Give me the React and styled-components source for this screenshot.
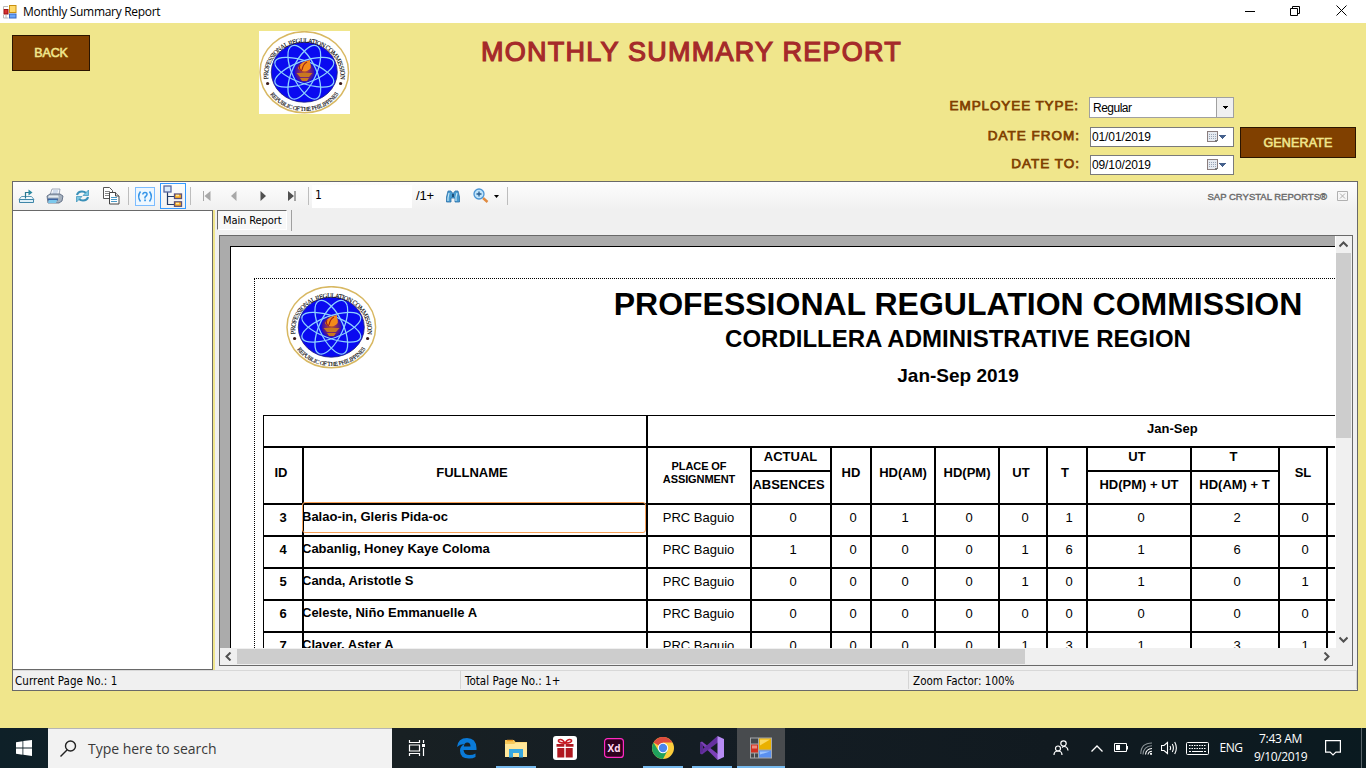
import React from "react";
import styled, { createGlobalStyle } from "styled-components";

const Global = createGlobalStyle`
  * { box-sizing: border-box; }
  body { margin: 0; overflow: hidden; background: #f0e68c; font-family: "Liberation Sans", Arial, sans-serif; }
  svg { display: block; flex: none; }
`;

const ui = `"Open Sans", "Segoe UI", sans-serif`;
const tahoma = `"DejaVu Sans Condensed", "DejaVu Sans", Tahoma, sans-serif`;

const Screen = styled.div`
  width: 1366px;
  height: 768px;
  display: flex;
  flex-direction: column;
  background: #f0e68c;
`;

/* Single-line run of text; $sp is the tracking in px. */
const Text = styled.span`
  white-space: pre;
  display: block;
  font-size: ${(p) => p.$size || 13}px;
  line-height: ${(p) => p.$lh || 16}px;
  letter-spacing: ${(p) => p.$sp || 0}px;
  font-weight: ${(p) => (p.$bold ? 700 : 400)};
  font-family: ${(p) => p.$font || "inherit"};
  color: ${(p) => p.$color || "inherit"};
`;

/* Regular letterforms thickened by a stroke, as WinForms emboldens its default face. */
const Heavy = styled(Text)`
  -webkit-text-stroke: ${(p) => p.$stroke || 0.5}px currentColor;
`;

/* ---------- title bar ---------- */
const TitleBar = styled.header`
  height: 23px;
  background: #fff;
  display: flex;
  align-items: center;
  padding-left: 3px;
  gap: 6px;
`;
const WindowButtons = styled.div`
  margin-left: auto;
  display: flex;
  padding-right: 2px;
`;
const WindowButton = styled.div`
  width: 46px;
  height: 22px;
  display: flex;
  align-items: center;
  justify-content: center;
`;

/* ---------- header ---------- */
const Header = styled.section`
  height: 158px;
  display: flex;
  align-items: flex-start;
`;
const BrownButton = styled.div`
  width: ${(p) => p.$w}px;
  height: ${(p) => p.$h}px;
  background: #804000;
  border: 1px solid #2b1500;
  display: flex;
  align-items: center;
  justify-content: center;
  color: #f0e68c;
`;
const BackSlot = styled.div`
  width: 259px;
  padding: 12px 0 0 12px;
`;
const LogoSlot = styled.div`
  width: 91px;
  margin-top: 8px;
  background: #fff;
`;
const TitleSlot = styled.div`
  width: 552px;
  padding: 12px 0 0 131px;
`;
const Form = styled.div`
  width: 332px;
  padding-top: 74px;
`;
const FormRow = styled.div`
  display: flex;
  justify-content: flex-end;
  align-items: flex-start;
  height: ${(p) => p.$h}px;
  gap: 10px;
`;
const Select = styled.div`
  width: 145px;
  height: 21px;
  border: 1px solid #a0a0a0;
  background: #fff;
  display: flex;
  justify-content: space-between;
  padding-left: 3px;
`;
const SelectArrow = styled.div`
  width: 17px;
  border-left: 1px solid #a0a0a0;
  background: #f0f0f0;
  display: flex;
  align-items: center;
  justify-content: center;
`;
const DateBox = styled.div`
  width: 144px;
  height: 20px;
  border: 1px solid #7a7a7a;
  background: #fff;
  display: flex;
  justify-content: space-between;
  padding: 0 6px 0 1px;
`;
const GenerateSlot = styled.div`
  padding: 104px 0 0 6px;
`;

/* ---------- report viewer ---------- */
const Viewer = styled.main`
  margin-left: 12px;
  width: 1346px;
  height: 510px;
  border: 1px solid #696969;
  display: flex;
  flex-direction: column;
  background: #f0f0f0;
`;
const Toolbar = styled.div`
  height: 28px;
  flex: none;
  display: flex;
  align-items: center;
  background: linear-gradient(#fdfdfd, #f0f0f0);
`;
const Tool = styled.div`
  width: ${(p) => p.$w}px;
  height: 28px;
  display: flex;
  align-items: center;
  justify-content: center;
`;
const Selected = styled.div`
  width: 26px;
  height: 26px;
  border: 1px solid #3399ff;
  display: flex;
  align-items: center;
  justify-content: center;
`;
const Divider = styled.div`
  width: 1px;
  height: 18px;
  background: #bdbdbd;
  margin-right: ${(p) => p.$r || 0}px;
`;
const PageInput = styled.div`
  width: 100px;
  height: 23px;
  background: #fff;
  padding-left: 3px;
`;
const Brand = styled.div`
  margin-left: auto;
  padding: 2px 9px 0 0;
  display: flex;
  align-items: center;
  gap: 10px;
`;
const Body = styled.div`
  display: flex;
  height: 460px;
  flex: none;
`;
const TreePane = styled.div`
  width: 200px;
  background: #fff;
  border-top: 1px solid #696969;
  border-right: 1px solid #696969;
  border-bottom: 1px solid #696969;
`;
const Splitter = styled.div`
  width: 4px;
  border-left: 2px solid #f0e68c;
`;
const ReportPane = styled.div`
  flex: 1;
  display: flex;
  flex-direction: column;
`;
const Tabs = styled.div`
  height: 25px;
  display: flex;
  align-items: flex-start;
`;
const Tab = styled.div`
  width: 70px;
  height: 20px;
  border: 1px solid #696969;
  border-right-color: #fff;
  border-bottom-color: #fff;
  background: #f8f8f8;
  padding: 2px 0 0 5px;
`;
const TabEdge = styled.div`
  margin-left: 4px;
  width: 1px;
  height: 21px;
  background: #a0a0a0;
`;
const Canvas = styled.div`
  margin-left: 2px;
  width: 1134px;
  height: 431px;
  border: 1px solid #696969;
  background: #ababab;
  display: grid;
  grid-template-columns: 1115px 17px;
  grid-template-rows: 412px 17px;
`;
const PageWindow = styled.div`
  overflow: hidden;
  padding: 10px 0 0 10px;
`;
const Page = styled.div`
  width: 1300px;
  height: 600px;
  background: #fff;
  border: 1px solid #000;
  padding: 31px 0 0 23px;
`;
const Margin = styled.div`
  height: 560px;
  border-top: 1px dotted #000;
  border-left: 1px dotted #000;
  padding: 7px 0 0 8px;
`;
const Masthead = styled.div`
  display: flex;
  height: 129px;
`;
const MastLogo = styled.div`
  padding-left: 23px;
  width: 135px;
`;
const MastText = styled.div`
  width: 1120px;
  display: flex;
  flex-direction: column;
  align-items: center;
`;

/* ---------- report table ---------- */
const columns = "39px 344px 104px 80px 40px 64px 64px 48px 40px 104px 88px 48px 60px";
const BandRow = styled.div`
  display: grid;
  grid-template-columns: 382px 1fr;
  height: 31px;
  border-left: 1px solid #000;
`;
const BandCell = styled.div`
  border-top: 1px solid #000;
  border-left: ${(p) => (p.$line ? "2px solid #000" : "0")};
  padding: 5px 0 0 499px;
`;
const Row = styled.div`
  display: grid;
  grid-template-columns: ${columns};
  height: ${(p) => p.$h}px;
`;
const Cell = styled.div`
  position: relative;
  border-left: ${(p) => (p.$first ? 1 : 2)}px solid #000;
  border-top: 2px solid #000;
  display: flex;
  flex-direction: column;
  align-items: ${(p) => (p.$left ? "flex-start" : "center")};
  padding-left: ${(p) => p.$pl || 0}px;
  padding-right: ${(p) => p.$pr || 0}px;
  padding-top: ${(p) => p.$pt || 0}px;
`;
const Half = styled.div`
  align-self: stretch;
  display: flex;
  justify-content: center;
  height: ${(p) => p.$h}px;
  padding: ${(p) => p.$pad};
  border-bottom: ${(p) => (p.$line ? "2px solid #000" : "0")};
`;
const NameText = styled(Text)`
  margin-left: -2px;
`;
const Highlight = styled.div`
  position: absolute;
  left: -2px;
  top: -3px;
  width: 344px;
  height: 31px;
  border-radius: 3px;
  border: 1px solid #f8a055;
`;

/* ---------- scrollbars ---------- */
const VBar = styled.div`
  background: #f0f0f0;
  border-left: 1px solid #fff;
  display: flex;
  flex-direction: column;
  align-items: center;
  padding: 1px 1px 0 0;
`;
const VThumb = styled.div`
  width: 15px;
  height: 185px;
  background: #cdcdcd;
  margin: 1px 0 auto;
`;
const HBar = styled.div`
  background: #f0f0f0;
  display: flex;
  align-items: center;
`;
const HThumb = styled.div`
  width: 788px;
  height: 15px;
  background: #cdcdcd;
  margin-right: auto;
`;
const BarArrow = styled.div`
  width: ${(p) => p.$w}px;
  height: ${(p) => p.$h}px;
  display: flex;
  align-items: center;
  justify-content: center;
`;
const Corner = styled.div`
  background: #f0f0f0;
`;

const Status = styled.div`
  flex: 1;
  display: flex;
  align-items: flex-start;
  border-top: 1px solid #d8d8d8;
`;
const StatusCell = styled.div`
  width: ${(p) => p.$w}px;
  height: 18px;
  border-right: 1px solid #d5d5d5;
  padding: 2px 0 0 ${(p) => p.$pl}px;
`;

/* ---------- taskbar ---------- */
const Taskbar = styled.footer`
  height: 40px;
  margin-top: 37px;
  display: flex;
  color: #fff;
  background: linear-gradient(90deg, #0e2028 0, #182023 400px, #141d24 700px, #111a20 1050px, #0a1a20 1366px);
`;
const Slot = styled.div`
  width: ${(p) => p.$w}px;
  height: 40px;
  display: flex;
  align-items: center;
  justify-content: center;
`;
const Search = styled.div`
  width: 344px;
  background: #f2f2f2;
  border-top: 1px solid #b5b5b5;
  display: flex;
  align-items: center;
  padding-left: 11px;
  gap: 11px;
`;
const TaskApp = styled.div`
  width: ${(p) => (p.$active ? 48 : 49)}px;
  margin-left: ${(p) => (p.$active ? 1 : 0)}px;
  height: 40px;
  display: flex;
  flex-direction: column;
  align-items: center;
  background: ${(p) => (p.$active ? "#484b4e" : "transparent")};
`;
const AppIcon = styled.div`
  height: 38px;
  padding-top: 2px;
  display: flex;
  align-items: center;
`;
const Running = styled.div`
  height: 2px;
  width: ${(p) => (p.$active ? 48 : 40)}px;
  background: #76b9ed;
`;
const Tray = styled.div`
  margin-left: auto;
  display: flex;
  width: 323px;
`;
const Clock = styled.div`
  width: 67px;
  padding-top: 2px;
  display: flex;
  flex-direction: column;
  align-items: center;
`;
const ShowDesktop = styled.div`
  margin-left: 9px;
  width: 1px;
  background: #59646a;
`;

function Seal({ id, width = 91, height = 83 }) {
  return (
    <svg width={width} height={height} viewBox="0 0 91 83" preserveAspectRatio="none">
      <defs>
        <path id={`${id}t`} d="M9.700 51 A36.200 33.300 0 1 1 80.900 51" />
        <path id={`${id}b`} d="M5.500 51 A40.800 37.200 0 0 0 85.100 51" />
        <radialGradient id={`${id}g`}>
          <stop offset="0" stopColor="#c05a20" />
          <stop offset="0.55" stopColor="#7a2870" />
          <stop offset="1" stopColor="#3010b0" />
        </radialGradient>
      </defs>
      <ellipse cx="45.3" cy="41.2" rx="44.3" ry="40.5" fill="#fff" stroke="#d8b862" strokeWidth="1.5" />
      <ellipse cx="45.3" cy="41.2" rx="33" ry="30" fill="#0a0af0" stroke="#20207a" strokeWidth="0.8" />
      <g transform="translate(45.3 41.2) scale(1 .91)" fill="none" stroke="#8ed2ff" strokeWidth="1.3">
        {[22.5, 67.5, 112.5, 157.5].map((a) => (
          <ellipse key={a} rx="31.500" ry="12" transform={`rotate(${a})`} />
        ))}
      </g>
      <ellipse cx="45.5" cy="41" rx="10" ry="10.5" fill={`url(#${id}g)`} />
      <path d="M39 37 Q42 30 51 29 L51 32 Q54 37 48 40 Q41 41 39 37 Z" fill="#f48a1a" />
      <path d="M43 39 Q44 33 48 31 M41 34 Q39 38 43 40" fill="none" stroke="#9c2418" strokeWidth="1.2" />
      <path d="M37.5 42 H53.5 L50 46 H41 Z M41 47 H50 L48 50 H43 Z" fill="#c87820" />
      <circle cx="8.6" cy="52.5" r="1.6" fill="#3a1a18" />
      <circle cx="81.6" cy="52.5" r="1.6" fill="#3a1a18" />
      <text fontFamily="Liberation Serif, serif" fontSize="6.600" letterSpacing="-0.6" fill="#111" stroke="#111" strokeWidth=".12" textAnchor="middle">
        <textPath href={`#${id}t`} startOffset="50%">PROFESSIONAL REGULATION COMMISSION</textPath>
      </text>
      <text fontFamily="Liberation Serif, serif" fontSize="6" letterSpacing="-0.35" fill="#111" stroke="#111" strokeWidth=".12" textAnchor="middle">
        <textPath href={`#${id}b`} startOffset="50%">REPUBLIC OF THE PHILIPPINES</textPath>
      </text>
    </svg>
  );
}

const FormIcon = ({ s = 14 }) => (
  <svg width={s} height={s} viewBox="0 0 22 21">
    <rect width="22" height="21" fill="#a5a8ab" />
    <path d="M1 1h7v5H1zM1 16h3v4H1zM5 16h3v4H5z" fill="#45494c" />
    <rect x="1" y="7" width="7" height="8" fill="#d03020" />
    <path d="M2 8h5v3H2z" fill="#f08a7a" />
    <rect x="9" y="1" width="12" height="11" fill="#eab000" />
    <path d="M10 2h10L10 8z" fill="#fbd860" />
    <rect x="9" y="13" width="12" height="7" fill="#5a90f0" />
    <path d="M10 14h10l-10 3z" fill="#9cc4ff" />
  </svg>
);

const SmallFormIcon = () => (
  <svg width="14" height="14" viewBox="0 0 14 14">
    <path d="M.5 4V1.500H5M.5 10v3h5M3 10v3" fill="none" stroke="#b8b8b8" />
    <rect x="1" y="4.500" width="4" height="4.500" fill="#d83030" stroke="#9c1010" />
    <rect x="6.500" y=".5" width="6.500" height="7" fill="#ffda6a" stroke="#c89010" />
    <rect x="6.500" y="9" width="6.500" height="4" fill="#6aa4fa" stroke="#3868c0" />
  </svg>
);

const CalendarDrop = () => (
  <svg width="21" height="18" viewBox="0 0 21 18" shapeRendering="crispEdges">
    <path d="M1.500 3.500h10v8l-2 2h-8z" fill="#e6eaf0" stroke="#8a7d7d" />
    <path d="M3 6.500h7M3 8.500h7M3 10.500h7" stroke="#9aa6b8" strokeDasharray="1 1" />
    <path d="M9 14v-2h3v1h-1v1z" fill="#777" />
    <path d="M13 7h7v1h-1v1h-1v1h-1v1h-1v-1h-1V9h-1V8h-1z" fill="#45608c" />
  </svg>
);

const Chevron = ({ d }) => (
  <svg width="9" height="9" viewBox="0 0 9 9"><path d={d} fill="none" stroke="#505050" strokeWidth="2" /></svg>
);

const Nav = ({ d, c }) => (
  <svg width="10" height="10" viewBox="0 0 10 10"><path d={d} fill={c} /></svg>
);

const ExportIcon = () => (
  <svg width="18" height="16" viewBox="0 0 18 16" fill="none">
    <path d="M3.500 8.500h10l2.500 3H1z" fill="#f2f9fd" stroke="#5a98b4" />
    <path d="M1.500 11.500h14v3h-14z" fill="#dff0f8" stroke="#3f86a8" />
    <path d="M7.500 10.500V4.500h4" stroke="#2a7890" strokeWidth="1.200" />
    <path d="M10.500 1.500l4 3-4 3z" fill="#2a88a0" />
  </svg>
);
const PrintIcon = () => (
  <svg width="18" height="16" viewBox="0 0 18 16">
    <path d="M6 1h8l-1 6H4z" fill="#f6f8fc" stroke="#8a94a8" strokeWidth=".8" />
    <path d="M7 3h5M6.500 5h5" stroke="#a8bede" />
    <path d="M1 8l3-2h10l3 2-1 5-3 2H2z" fill="#a5b0bd" stroke="#50607a" strokeWidth=".8" />
    <path d="M3 7.500h9l1 2H2z" fill="#e4ecf4" />
    <path d="M2 10.500h10v2H2z" fill="#3b64a4" />
    <path d="M3 12h8l-1 3H2z" fill="#7cc8ec" />
  </svg>
);
const RefreshIcon = () => (
  <svg width="15" height="14" viewBox="0 0 15 14" fill="none">
    <path d="M2 6Q3 2.500 7 2.500Q9.500 2.500 11 4" stroke="#3a90b8" strokeWidth="2.200" />
    <path d="M13.500 1v5.500H8z" fill="#7cc8e4" stroke="#3a90b8" strokeWidth=".7" />
    <path d="M13 8Q12 11.500 8 11.500Q5.500 11.500 4 10" stroke="#3a90b8" strokeWidth="2.200" />
    <path d="M1.500 13V7.500H7z" fill="#7cc8e4" stroke="#3a90b8" strokeWidth=".7" />
  </svg>
);
const CopyIcon = () => (
  <svg width="17" height="18" viewBox="0 0 17 18">
    <path d="M.5.5h6l3 3v8h-9z" fill="#fff" stroke="#555" />
    <path d="M2 4.500h5M2 6.500h5M2 8.500h5" stroke="#888" />
    <path d="M6.500 5.500h6l3.500 3.500v8h-9.500z" fill="#fff" stroke="#444" />
    <path d="M12.500 5.500V9H16" fill="#ddd" stroke="#444" />
    <path d="M8 10.500h6M8 12.500h6M8 14.500h6" stroke="#4a9ac8" />
  </svg>
);
const HelpIcon = () => (
  <svg width="20" height="19" viewBox="0 0 20 19">
    <rect x=".5" y=".5" width="19" height="18" fill="#eef7ff" stroke="#7cbcff" />
    <path d="M5.500 4.500Q1.800 9.500 5.500 14.500M14.500 4.500Q18.200 9.500 14.500 14.500M7.800 7.500Q8 5.500 10 5.500Q12.300 5.500 12 7.500Q11.700 8.700 10 10V11.500" fill="none" stroke="#3494e8" strokeWidth="1.500" />
    <rect x="9.200" y="12.500" width="1.700" height="1.700" fill="#3494e8" />
  </svg>
);
const TreeIcon = () => (
  <svg width="20" height="22" viewBox="0 0 20 22">
    <path d="M4.500 7v12.500h7M4.500 11.500h7" fill="none" stroke="#223a66" strokeWidth="1.200" />
    <rect x="1" y="1" width="7" height="6" fill="#dcebfa" stroke="#5868a0" strokeWidth="1.300" />
    <rect x="11.500" y="9" width="7" height="4.500" fill="#ffb020" stroke="#5c5078" strokeWidth="1.300" />
    <rect x="11.500" y="16.800" width="7" height="4.500" fill="#ffb020" stroke="#5c5078" strokeWidth="1.300" />
    <path d="M13 10.500h3M13 18.500h3" stroke="#ffe6a0" strokeWidth="1.300" />
  </svg>
);
const Binoculars = () => (
  <svg width="14" height="13" viewBox="0 0 14 13">
    <path d="M2 1h3l1 2h2l1-2h3l1.500 6v5H9V8H5v4H.5V7z" fill="#4a9cd0" stroke="#2c70a8" strokeWidth=".8" />
    <path d="M3 3L2 8v3M11 3l-1 4v4" stroke="#c4e6f8" strokeWidth="1.200" fill="none" />
    <path d="M6 4h2v3H6z" fill="#24527c" />
  </svg>
);
const Magnifier = () => (
  <svg width="16" height="16" viewBox="0 0 16 16">
    <path d="M10 10l4.500 4" stroke="#e08a40" strokeWidth="2.400" />
    <circle cx="6" cy="6" r="5" fill="#bfe4fb" stroke="#4a94d4" strokeWidth="1.300" />
    <path d="M3.500 6h5M6 3.500v5" stroke="#285c90" strokeWidth="1.300" />
  </svg>
);

const rows = [
  ["3", "Balao-in, Gleris Pida-oc", [0, 0, 1, 0, 0, 1, 0, 2, 0]],
  ["4", "Cabanlig, Honey Kaye Coloma", [1, 0, 0, 0, 1, 6, 1, 6, 0]],
  ["5", "Canda, Aristotle S", [0, 0, 0, 0, 1, 0, 1, 0, 1]],
  ["6", "Celeste, Niño Emmanuelle A", [0, 0, 0, 0, 0, 0, 0, 0, 0]],
  ["7", "Claver, Aster A", [0, 0, 0, 0, 1, 3, 1, 3, 1]],
];

function SplitHead({ top, bottom, pr = 4, last = 0, sp = 0 }) {
  return (
    <Cell>
      <Half $h={24} $line $pad={`1px ${pr}px 0 0`}><Text $bold>{top}</Text></Half>
      <Half $h={31} $pad={`5px ${last}px 0 0`}><Text $bold $sp={sp}>{bottom}</Text></Half>
    </Cell>
  );
}

function ReportTable() {
  return (
    <div>
      <BandRow>
        <BandCell />
        <BandCell $line><Text $bold>Jan-Sep</Text></BandCell>
      </BandRow>
      <Row $h={57}>
        <Cell $first $pt={17} $pr={4}><Text $bold>ID</Text></Cell>
        <Cell $pt={17} $pr={6}><Text $bold>FULLNAME</Text></Cell>
        <Cell $pt={12}>
          <Text $bold $size={11} $lh={13} $sp={-0.1}>PLACE OF</Text>
          <Text $bold $size={11} $lh={13} $sp={-0.1}>ASSIGNMENT</Text>
        </Cell>
        <SplitHead top="ACTUAL" bottom="ABSENCES" pr={1} last={5} />
        <Cell $pt={17}><Text $bold>HD</Text></Cell>
        <Cell $pt={17}><Text $bold>HD(AM)</Text></Cell>
        <Cell $pt={17}><Text $bold>HD(PM)</Text></Cell>
        <Cell $pt={17} $pr={4}><Text $bold>UT</Text></Cell>
        <Cell $pt={17} $pr={4}><Text $bold>T</Text></Cell>
        <SplitHead top="UT" bottom="HD(PM) + UT" />
        <SplitHead top="T" bottom="HD(AM) + T" pr={3} last={1} />
        <Cell $pt={17}><Text $bold>SL</Text></Cell>
        <Cell />
      </Row>
      {rows.map(([id, name, values], i) => (
        <Row $h={32} key={id}>
          <Cell $first $pt={5}><Text $bold>{id}</Text></Cell>
          <Cell $left $pt={4}>
            <NameText $bold>{name}</NameText>
            {i === 0 && <Highlight />}
          </Cell>
          <Cell $pt={5} $pr={1}><Text>PRC Baguio</Text></Cell>
          {values.map((v, k) => (
            <Cell $pt={5} $pl={4} key={k}><Text>{v}</Text></Cell>
          ))}
          <Cell />
        </Row>
      ))}
    </div>
  );
}

export default function App() {
  return (
    <Screen>
      <Global />
      <TitleBar>
        <SmallFormIcon />
        <Text $font={ui} $size={12} $sp={-0.3}>Monthly Summary Report</Text>
        <WindowButtons>
          <WindowButton><svg width="11" height="11"><path d="M1 5.500h10" stroke="#000" /></svg></WindowButton>
          <WindowButton>
            <svg width="11" height="11" fill="none" stroke="#000"><path d="M.5 2.500h7v7h-7zM2.500 2.500v-2h7v7h-2" /></svg>
          </WindowButton>
          <WindowButton><svg width="11" height="13"><path d="M.5.5l10 10M10.500.5l-10 10" stroke="#000" /></svg></WindowButton>
        </WindowButtons>
      </TitleBar>

      <Header>
        <BackSlot><BrownButton $w={78} $h={36}><Heavy $size={12.5} $sp={-0.1} $stroke={0.6}>BACK</Heavy></BrownButton></BackSlot>
        <LogoSlot><Seal id="head" /></LogoSlot>
        <TitleSlot><Heavy $size={27} $lh={34} $sp={1.25} $stroke={1.2} $color="#a52a2a">MONTHLY SUMMARY REPORT</Heavy></TitleSlot>
        <Form>
          <FormRow $h={30}>
            <Heavy $size={13.5} $lh={18} $sp={0.9} $stroke={0.75} $color="#804000">EMPLOYEE TYPE:</Heavy>
            <Select>
              <Text $size={12} $lh={20} $sp={-0.5}>Regular</Text>
              <SelectArrow>
                <svg width="5" height="3" shapeRendering="crispEdges"><path d="M0 0h5v1H4v1H3v1H2V2H1V1H0z" /></svg>
              </SelectArrow>
            </Select>
          </FormRow>
          <FormRow $h={28}>
            <Heavy $size={13.5} $lh={17} $sp={1} $stroke={0.75} $color="#804000">DATE FROM:</Heavy>
            <DateBox><Text $size={12} $lh={18} $sp={-0.12}>01/01/2019</Text><CalendarDrop /></DateBox>
          </FormRow>
          <FormRow $h={28}>
            <Heavy $size={13.5} $lh={17} $sp={1} $stroke={0.75} $color="#804000">DATE TO:</Heavy>
            <DateBox><Text $size={12} $lh={18} $sp={-0.12}>09/10/2019</Text><CalendarDrop /></DateBox>
          </FormRow>
        </Form>
        <GenerateSlot><BrownButton $w={116} $h={31}><Heavy $size={12.5} $sp={0.15} $stroke={0.6}>GENERATE</Heavy></BrownButton></GenerateSlot>
      </Header>

      <Viewer>
        <Toolbar>
          <Tool $w={28}><ExportIcon /></Tool>
          <Tool $w={28}><PrintIcon /></Tool>
          <Tool $w={27}><RefreshIcon /></Tool>
          <Tool $w={31}><CopyIcon /></Tool>
          <Tool $w={1} />
          <Divider $r={6} />
          <Tool $w={20}><HelpIcon /></Tool>
          <Tool $w={35}><Selected><TreeIcon /></Selected></Tool>
          <Divider $r={2} />
          <Tool $w={27}><Nav c="#a8a8a8" d="M1 0h1v10H1zM2.500 5l6-5v10z" /></Tool>
          <Tool $w={27}><Nav c="#a8a8a8" d="M2 5l5.500-5v10z" /></Tool>
          <Tool $w={31}><Nav c="#505050" d="M2.500 0v10l5.500-5z" /></Tool>
          <Tool $w={27}><Nav c="#505050" d="M1 0v10l6-5zM7.500 0h1v10h-1z" /></Tool>
          <Tool $w={3} />
          <Divider $r={3} />
          <PageInput><Text $font={tahoma} $size={12} $lh={21}>1</Text></PageInput>
          <Tool $w={26}><Text $size={13} $sp={-0.2}>/1+</Text></Tool>
          <Tool $w={29}><Binoculars /></Tool>
          <Tool $w={27}><Magnifier /></Tool>
          <Tool $w={5}><svg width="5" height="3"><path d="M0 0h5L2.500 3z" /></svg></Tool>
          <Tool $w={8} />
          <Divider />
          <Brand>
            <Heavy $size={9.5} $color="#6a6a6a" $stroke={0.4}>SAP CRYSTAL REPORTS®</Heavy>
            <svg width="11" height="12"><path d="M.5.5h10v9H.5zM3 2.500l5 5M8 2.500l-5 5" fill="none" stroke="#b0b0b0" /></svg>
          </Brand>
        </Toolbar>
        <Body>
          <TreePane />
          <Splitter />
          <ReportPane>
            <Tabs>
              <Tab><Text $font={tahoma} $size={11} $sp={-0.1}>Main Report</Text></Tab>
              <TabEdge />
            </Tabs>
            <Canvas>
              <PageWindow>
                <Page>
                  <Margin>
                    <Masthead>
                      <MastLogo><Seal id="page" /></MastLogo>
                      <MastText>
                        <Text $bold $size={32} $lh={36}>PROFESSIONAL REGULATION COMMISSION</Text>
                        <Text $bold $size={24} $lh={34}>CORDILLERA ADMINISTRATIVE REGION</Text>
                        <Text $bold $size={19} $lh={39}>Jan-Sep 2019</Text>
                      </MastText>
                    </Masthead>
                    <ReportTable />
                  </Margin>
                </Page>
              </PageWindow>
              <VBar>
                <BarArrow $w={15} $h={15}><Chevron d="M.5 6.500l4-4 4 4" /></BarArrow>
                <VThumb />
                <BarArrow $w={15} $h={17}><Chevron d="M.5 2.500l4 4 4-4" /></BarArrow>
              </VBar>
              <HBar>
                <BarArrow $w={17} $h={15}><Chevron d="M6.500.5l-4 4 4 4" /></BarArrow>
                <HThumb />
                <BarArrow $w={17} $h={15}><Chevron d="M2.500.5l4 4-4 4" /></BarArrow>
              </HBar>
              <Corner />
            </Canvas>
          </ReportPane>
        </Body>
        <Status>
          <StatusCell $w={448} $pl={2}><Text $font={tahoma} $size={11.5} $sp={0.08}>Current Page No.: 1</Text></StatusCell>
          <StatusCell $w={448} $pl={4}><Text $font={tahoma} $size={11.5} $sp={0.04}>Total Page No.: 1+</Text></StatusCell>
          <StatusCell $w={448} $pl={4}><Text $font={tahoma} $size={11.5} $sp={0.04}>Zoom Factor: 100%</Text></StatusCell>
        </Status>
      </Viewer>

      <Taskbar>
        <Slot $w={48}>
          <svg width="16" height="16" viewBox="0 0 16 16" fill="#fff"><path d="M0 2.200l6.500-1v6.300H0zM7.300 1.100L16 0v7.500H7.300zM0 8.400h6.500v6.400l-6.500-1zM7.300 8.400H16V16l-8.700-1.200z" /></svg>
        </Slot>
        <Search>
          <svg width="18" height="18" viewBox="0 0 18 18" fill="none" stroke="#222" strokeWidth="1.400"><circle cx="11.500" cy="6" r="5" /><path d="M8 10L1.500 16.500" /></svg>
          <Text $font={ui} $size={14} $lh={20} $sp={-0.02} $color="#3a3a3a">Type here to search</Text>
        </Search>
        <Slot $w={50}>
          <svg width="18" height="16" viewBox="0 0 18 16" fill="none" stroke="#fff" strokeWidth="1.200">
            <path d="M1.500 0v2.500h10V0M1.500 16v-2.500h10V16M1.500 5h10v6h-10zM15.500 0v3M15.500 8v8" /><path d="M14 4h3v3h-3z" fill="#fff" stroke="none" />
          </svg>
        </Slot>
        <TaskApp>
          <AppIcon>
            <svg width="21" height="22" viewBox="0 0 21 22"><path d="M1 10Q2 1 11 1Q20 1 20.500 11V13H7.500Q8 18 13.500 18Q17 18 19.500 16.500V20Q17 21.500 13 21.500Q4 21.500 4 13.500Q4 9 8.500 7Q4 7.200 1 10ZM7.800 9.500H14.500Q14.500 5.500 11.300 5.500Q8.300 5.500 7.800 9.500Z" fill="#0a7ad8" /></svg>
          </AppIcon>
        </TaskApp>
        <TaskApp>
          <AppIcon>
            <svg width="22" height="19" viewBox="0 0 22 19"><path d="M0 1h9l1.500 2H22v14H0z" fill="#f6c95c" /><path d="M0 5l9 0 2-1.500h11V18H0z" fill="#ffe79a" /><path d="M2 1.500h6" stroke="#f09a20" strokeWidth="1.500" /><path d="M4 18.500V10h14v8.500h-4V14H8v4.500z" fill="#38a8e0" /></svg>
          </AppIcon>
          <Running />
        </TaskApp>
        <TaskApp>
          <AppIcon>
            <svg width="24" height="24" viewBox="0 0 24 24"><rect width="24" height="24" rx="3" fill="#fff" /><path d="M3.500 8h7.800v2.700H3.500zM12.700 8h7.800v2.700h-7.800zM4.300 12h7v9.500h-7zM12.700 12h7v9.500h-7z" fill="#b01820" /><path d="M12 7.200Q4.500 7 5.500 4.200Q8.500 2 12 7.200Q15.500 2 18.500 4.200Q19.500 7 12 7.200Z" fill="none" stroke="#c81820" strokeWidth="1.600" /></svg>
          </AppIcon>
        </TaskApp>
        <TaskApp>
          <AppIcon>
            <svg width="20" height="20" viewBox="0 0 20 20"><rect x=".6" y=".6" width="18.800" height="18.800" rx="3" fill="#2e001e" stroke="#ff2bc2" strokeWidth="1.200" /><text x="10" y="14" textAnchor="middle" fontFamily="Open Sans, sans-serif" fontWeight="700" fontSize="11" textLength="13" lengthAdjust="spacingAndGlyphs" fill="#ffd9f2">Xd</text></svg>
          </AppIcon>
        </TaskApp>
        <TaskApp>
          <AppIcon>
            <svg width="22" height="22" viewBox="0 0 22 22"><circle cx="11" cy="11" r="11" fill="#fccd3c" /><path d="M11 11L1.500 5.500A11 11 0 0 1 20.500 5.500H11z" fill="#dd4b3e" /><path d="M1.500 5.500A11 11 0 0 0 11 22L15.500 13.500 11 11 6 13z" fill="#1fa15d" /><circle cx="11" cy="11" r="5.200" fill="#fff" /><circle cx="11" cy="11" r="4.200" fill="#4a86ee" /></svg>
          </AppIcon>
          <Running />
        </TaskApp>
        <TaskApp>
          <AppIcon>
            <svg width="24" height="24" viewBox="0 0 24 24"><path d="M0 6.500L2 5.500 18.500 18.500 17.500 24 2 8.500z" fill="#7b40b8" /><path d="M0 17.500L2 18.500 18.500 6 17.500 0 1 14.500z" fill="#6530a0" /><path d="M0 6.500L3 9V15.500L0 17.500z" fill="#5a2a92" /><path d="M17.500 0L24 3V21L17.500 24z" fill="#b78cf4" /></svg>
          </AppIcon>
          <Running />
        </TaskApp>
        <TaskApp $active>
          <AppIcon><FormIcon s={22} /></AppIcon>
          <Running $active />
        </TaskApp>
        <Tray>
          <Slot $w={36}>
            <svg width="16" height="16" viewBox="0 0 16 16" fill="none" stroke="#fff" strokeWidth="1.200"><circle cx="10.500" cy="3.500" r="2.700" /><circle cx="5" cy="8.500" r="2.500" /><path d="M1 15Q1 11 5 11Q9 11 9 15M9 7.500Q10 6.500 11 6.500Q14.500 6.500 15 10.500" /></svg>
          </Slot>
          <Slot $w={36}><svg width="12" height="7" fill="none" stroke="#fff" strokeWidth="1.300"><path d="M.5 6.500L6 1l5.500 5.500" /></svg></Slot>
          <Slot $w={12}><svg width="15" height="10" fill="none" stroke="#fff"><path d="M.5.5h12v8h-12zM13.500 3v3.500" /><path d="M2 2h4v5H2z" fill="#fff" stroke="none" /></svg></Slot>
          <Slot $w={38}>
            <svg width="12" height="13" viewBox="0 0 12 13" fill="none" strokeWidth="1.100"><path d="M.8 12Q.8 1 12 1M3 12.500Q3.500 4 12 3.800" stroke="#8a9296" /><path d="M5.500 12.500Q6 7 12 6.500M8 12.500Q8.500 9.500 12 9.300" stroke="#fff" /><circle cx="11" cy="11.800" r="1.100" fill="#fff" /></svg>
          </Slot>
          <Slot $w={9}>
            <svg width="17" height="14" viewBox="0 0 17 14" fill="none" stroke="#fff" strokeWidth="1.100"><path d="M.5 4.500H3L6.500 1.500v11L3 9.500H.5zM9 5Q10.200 7 9 9M11.300 3Q13.500 7 11.300 11M13.700 1Q17 7 13.700 13" /></svg>
          </Slot>
          <Slot $w={46}>
            <svg width="23" height="13" fill="none" stroke="#fff"><rect x=".5" y=".5" width="22" height="12" rx="1" /><path d="M3 3.500h17M3 6.500h17" strokeDasharray="1.500 1" /><path d="M3 9.500h2M6 9.500h11M18 9.500h2" /></svg>
          </Slot>
          <Slot $w={22}><Text $font={ui} $size={12} $sp={-0.5}>ENG</Text></Slot>
          <Slot $w={5} />
          <Clock>
            <Text $font={ui} $size={12} $lh={18} $sp={-0.35}>7:43 AM</Text>
            <Text $font={ui} $size={12} $lh={18} $sp={-0.4}>9/10/2019</Text>
          </Clock>
          <Slot $w={38}><svg width="16" height="16" fill="none" stroke="#fff" strokeWidth="1.200"><path d="M.6.6h14.800v11.500h-4.500L8 15l-2.900-2.900H.6z" /></svg></Slot>
          <ShowDesktop />
        </Tray>
      </Taskbar>
    </Screen>
  );
}
